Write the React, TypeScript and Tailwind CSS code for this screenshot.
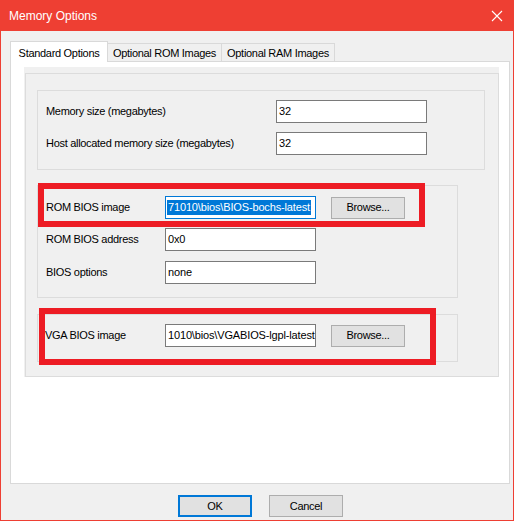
import React from 'react'

const font = { fontFamily: '"Liberation Sans", Arial, sans-serif' }

function TextBox({ value, focused = false, width = 'w-[151px]' }: { value: string; focused?: boolean; width?: string }) {
  return (
    <div
      className={`${width} h-[23px] bg-white border flex items-center overflow-hidden whitespace-nowrap pl-px tracking-[-0.15px] ${
        focused ? 'border-[#0078d7]' : 'border-[#7a7a7a]'
      }`}
    >
      {focused ? <span className="bg-[#0078d7] text-white leading-[15px] px-px">{value}</span> : <span className="px-px">{value}</span>}
    </div>
  )
}

function Button({ label, primary = false, className = '' }: { label: string; primary?: boolean; className?: string }) {
  return (
    <div
      className={`h-[22px] flex items-center justify-center bg-[#e1e1e1] ${
        primary ? 'border-2 border-[#0078d7]' : 'border border-[#adadad]'
      } ${className}`}
    >
      {label}
    </div>
  )
}

export default function App() {
  return (
    <div
      className="relative w-[514px] h-[521px] bg-[#ee3f33] px-px pb-px flex flex-col text-[11px] tracking-[-0.3px] text-black"
      style={font}
    >
      {/* Title bar */}
      <div className="h-[31px] flex items-center justify-between pl-[8px] pr-[10px] text-white tracking-normal">
        <span className="text-[12px] pt-[1px]">Memory Options</span>
        <svg width="12" height="12" viewBox="0 0 12 12">
          <path d="M1 1 L11 11 M11 1 L1 11" stroke="white" strokeWidth="1.1" />
        </svg>
      </div>

      {/* Body */}
      <div className="flex-1 bg-[#f0f0f0] pt-[10px] pl-[9px]">
        {/* Tabs */}
        <div className="flex items-end h-[20px]">
          <div className="relative z-10 h-[21px] -mb-px w-[98px] bg-white border border-b-0 border-[#d9d9d9] flex items-start justify-center pt-[3px]">
            Standard Options
          </div>
          <div className="h-[18px] w-[114px] border border-l-0 border-b-0 border-[#d9d9d9] flex items-center justify-center pt-[2px]">
            Optional ROM Images
          </div>
          <div className="h-[18px] w-[113px] border border-l-0 border-b-0 border-[#d9d9d9] flex items-center justify-center pt-[2px]">
            Optional RAM Images
          </div>
        </div>

        {/* Tab panel */}
        <div className="w-[500px] h-[423px] bg-white border border-[#d9d9d9] pl-[13px] pt-[5px]">
          <div className="w-[475px] h-[310px] bg-[#f0f0f0] pl-px pt-[6px]">
            <div className="w-[474px] h-[304px] border border-[#dcdcdc] pl-[11px] pt-[16px]">
              {/* Memory group */}
              <div className="w-[448px] h-[80px] border border-[#dcdcdc] pl-[8px] pt-[9px] flex flex-col gap-[9px]">
                <div className="flex items-center">
                  <span className="w-[230px]">Memory size (megabytes)</span>
                  <TextBox value="32" />
                </div>
                <div className="flex items-center">
                  <span className="w-[230px]">Host allocated memory size (megabytes)</span>
                  <TextBox value="32" />
                </div>
              </div>

              {/* ROM BIOS group */}
              <div className="mt-[15px] w-[421px] h-[113px] border border-[#dcdcdc] pl-[8px] pt-[10px] flex flex-col">
                <div className="flex items-center">
                  <span className="w-[119px]">ROM BIOS image</span>
                  <TextBox value={'71010\\bios\\BIOS-bochs-latest'} focused />
                  <Button label="Browse..." className="ml-[15px] w-[74px]" />
                </div>
                <div className="flex items-center mt-[9px]">
                  <span className="w-[119px]">ROM BIOS address</span>
                  <TextBox value="0x0" />
                </div>
                <div className="flex items-center mt-[10px]">
                  <span className="w-[119px]">BIOS options</span>
                  <TextBox value="none" />
                </div>
              </div>

              {/* VGA BIOS group */}
              <div className="mt-[16px] w-[421px] h-[48px] border border-[#dcdcdc] pl-[7px] pt-[9px]">
                <div className="flex items-center">
                  <span className="w-[120px]">VGA BIOS image</span>
                  <TextBox value={'1010\\bios\\VGABIOS-lgpl-latest'} />
                  <Button label="Browse..." className="ml-[15px] w-[74px]" />
                </div>
              </div>
            </div>
          </div>
        </div>

        {/* Dialog buttons */}
        <div className="flex gap-[17px] pl-[168px] mt-[11px]">
          <Button label="OK" primary className="w-[74px]" />
          <Button label="Cancel" className="w-[74px]" />
        </div>
      </div>

      {/* Red annotation boxes */}
      <div className="absolute left-[38px] top-[183px] w-[387px] h-[44px] border-[6px] border-[#ed1c24] pointer-events-none" />
      <div className="absolute left-[39px] top-[308px] w-[397px] h-[57px] border-[6px] border-[#ed1c24] pointer-events-none" />
    </div>
  )
}
